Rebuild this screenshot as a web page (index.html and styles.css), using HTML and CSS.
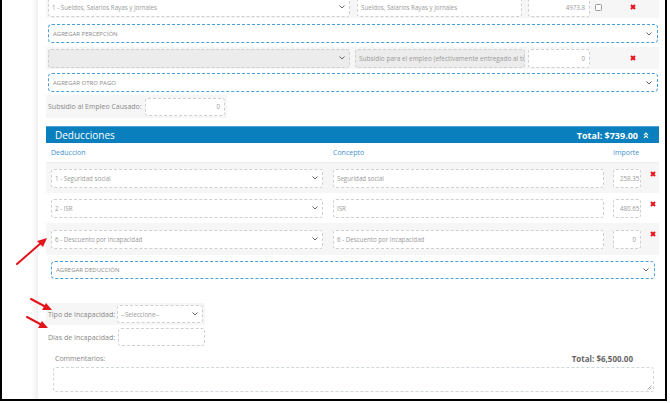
FILE: index.html
```html
<!DOCTYPE html>
<html lang="es">
<head>
<meta charset="utf-8">
<title>Nómina</title>
<link rel="stylesheet" href="styles.css">
</head>
<body>
<div class="frame">
  <div class="panel">
    <div class="prow rowa">
      <div class="field sel w302 mr7"><span>1 - Sueldos, Salarios Rayas y Jornales</span><svg class="chev" width="6" height="4" viewBox="0 0 6 4"><path d="M0.5 0.5L3 3L5.5 0.5" fill="none" stroke="#666" stroke-width="1"/></svg></div>
      <div class="field w165 mr6">Sueldos, Salarios Rayas y Jornales</div>
      <div class="field num w62">4973.8</div>
      <div class="check"></div>
      <svg class="del dela" width="6" height="6" viewBox="0 0 6 6"><path d="M1 1L5 5M5 1L1 5" stroke="#e8121b" stroke-width="2"/></svg>
    </div>
    <div class="add add1"><span>AGREGAR PERCEPCIÓN</span><svg class="chev" width="6" height="4" viewBox="0 0 6 4"><path d="M0.5 0.5L3 3L5.5 0.5" fill="none" stroke="#666" stroke-width="1"/></svg></div>
    <div class="prow rowb">
      <div class="field sel dis w302 mr5"><span></span><svg class="chev" width="6" height="4" viewBox="0 0 6 4"><path d="M0.5 0.5L3 3L5.5 0.5" fill="none" stroke="#666" stroke-width="1"/></svg></div>
      <div class="field dis w170 mr3"><span class="fit">Subsidio para el empleo (efectivamente entregado al tr</span></div>
      <div class="field num w62">0</div>
      <svg class="del delb" width="6" height="6" viewBox="0 0 6 6"><path d="M1 1L5 5M5 1L1 5" stroke="#e8121b" stroke-width="2"/></svg>
    </div>
    <div class="add add2"><span>AGREGAR OTRO PAGO</span><svg class="chev" width="6" height="4" viewBox="0 0 6 4"><path d="M0.5 0.5L3 3L5.5 0.5" fill="none" stroke="#666" stroke-width="1"/></svg></div>
    <div class="inline subs">
      <span class="label">Subsidio al Empleo Causado:</span>
      <div class="field num w80">0</div>
    </div>

    <div class="dhead">
      <span class="dtitle">Deducciones</span>
      <span class="dtotal">Total: $739.00
        <svg width="6" height="7" viewBox="0 0 6 7"><path d="M1 3.2L3 1.2L5 3.2M1 5.8L3 3.8L5 5.8" fill="none" stroke="#fff" stroke-width="1.2"/></svg>
      </span>
    </div>
    <div class="thead">
      <span class="c1">Deduccion</span>
      <span class="c2">Concepto</span>
      <span class="c3">Importe</span>
    </div>
    <div class="trow odd">
      <div class="field sel c1"><span>1 - Seguridad social</span><svg class="chev" width="6" height="4" viewBox="0 0 6 4"><path d="M0.5 0.5L3 3L5.5 0.5" fill="none" stroke="#666" stroke-width="1"/></svg></div>
      <div class="field c2">Seguridad social</div>
      <div class="field num c3 clip">258.35</div>
      <svg class="del tdel" width="6" height="6" viewBox="0 0 6 6"><path d="M1 1L5 5M5 1L1 5" stroke="#e8121b" stroke-width="2"/></svg>
    </div>
    <div class="trow">
      <div class="field sel c1"><span>2 - ISR</span><svg class="chev" width="6" height="4" viewBox="0 0 6 4"><path d="M0.5 0.5L3 3L5.5 0.5" fill="none" stroke="#666" stroke-width="1"/></svg></div>
      <div class="field c2">ISR</div>
      <div class="field num c3 clip">480.65</div>
      <svg class="del tdel" width="6" height="6" viewBox="0 0 6 6"><path d="M1 1L5 5M5 1L1 5" stroke="#e8121b" stroke-width="2"/></svg>
    </div>
    <div class="trow odd last">
      <div class="field sel c1"><span>6 - Descuento por incapacidad</span><svg class="chev" width="6" height="4" viewBox="0 0 6 4"><path d="M0.5 0.5L3 3L5.5 0.5" fill="none" stroke="#666" stroke-width="1"/></svg></div>
      <div class="field c2">6 - Descuento por incapacidad</div>
      <div class="field num c3">0</div>
      <svg class="del tdel" width="6" height="6" viewBox="0 0 6 6"><path d="M1 1L5 5M5 1L1 5" stroke="#e8121b" stroke-width="2"/></svg>
    </div>
    <div class="add add3"><span>AGREGAR DEDUCCIÓN</span><svg class="chev" width="6" height="4" viewBox="0 0 6 4"><path d="M0.5 0.5L3 3L5.5 0.5" fill="none" stroke="#666" stroke-width="1"/></svg></div>

    <div class="inline tipo">
      <span class="label lw">Tipo de Incapacidad:</span>
      <div class="field sel w86"><span>--Seleccione--</span><svg class="chev" width="6" height="4" viewBox="0 0 6 4"><path d="M0.5 0.5L3 3L5.5 0.5" fill="none" stroke="#666" stroke-width="1"/></svg></div>
    </div>
    <div class="inline dias">
      <span class="label lw">Días de Incapacidad:</span>
      <div class="field w87"></div>
    </div>
    <div class="comrow">
      <span class="label">Commentarios:</span>
      <span class="gtotal">Total: $6,500.00</span>
    </div>
    <div class="textarea">
      <svg class="grip" width="5" height="5" viewBox="0 0 5 5"><path d="M0.5 4.5L4.5 0.5M2.5 4.5L4.5 2.5" stroke="#999" stroke-width="0.8"/></svg>
    </div>
  </div>

  <svg class="annot" width="667" height="401" viewBox="0 0 667 401">
    <g stroke="#e3141b" stroke-width="2" stroke-linecap="round">
      <line x1="17" y1="264" x2="41" y2="243"/>
      <line x1="31" y1="299" x2="46" y2="307"/>
      <line x1="27" y1="317" x2="42" y2="325"/>
    </g>
    <g fill="#e3141b">
      <polygon points="47,238 37,241 43,247"/>
      <polygon points="52,310 42,310 46,303"/>
      <polygon points="48,328 38,328 42,321"/>
    </g>
  </svg>
</div>
</body>
</html>
```
FILE: styles.css
```css
* { box-sizing: border-box; margin: 0; padding: 0; }
body { margin: 0; background: #fff; font-family: "Open Sans", "Liberation Sans", sans-serif; color: #888; }

.frame { position: relative; width: 667px; height: 401px; border: 2px solid #000; border-top: none; overflow: hidden; background: #fff; }
.panel { margin-left: 36px; margin-top: -4px; height: 410px; padding: 0 6px 0 8px; background: #fff; box-shadow: -3px 0 5px rgba(0,0,0,0.07); }

.field { height: 19px; border: 1px dashed #cfcfcf; border-radius: 3px; background: #fff; font-size: 6.2px; color: #9a9a9a; display: flex; align-items: center; padding: 0 4px 0 3px; white-space: nowrap; overflow: hidden; flex: none; }
.field.sel { justify-content: space-between; }
.field.num { justify-content: flex-end; }
.field.dis { background: #ececec; }
.field.clip { justify-content: flex-start; padding-left: 6px; }
.fit { font-size: 6.4px; letter-spacing: 0.05px; }
.chev { flex: none; margin-left: 4px; }

.w302 { width: 302px; }
.w165 { width: 165px; }
.w170 { width: 170px; }
.w62 { width: 62px; }
.w80 { width: 80px; }
.w86 { width: 86px; }
.w87 { width: 87px; }
.mr7 { margin-right: 7px; }
.mr6 { margin-right: 6px; }
.mr5 { margin-right: 5px; }
.mr3 { margin-right: 3px; }

.prow { display: flex; align-items: center; background: #f6f6f6; padding: 1px 2px; height: 22px; }
.check { width: 7px; height: 7px; border: 1px solid #999; border-radius: 1.5px; background: #fff; margin-left: 5px; flex: none; }
.del { flex: none; display: block; }
.dela { margin-left: 28px; }
.delb { margin-left: 40px; }

.add { width: 610px; height: 19px; margin-left: 2px; border: 1px dashed #4a9fda; border-radius: 4px; display: flex; align-items: center; justify-content: space-between; padding: 0 5px 0 4px; font-size: 6px; color: #8a8a8a; }
.add1 { margin-top: 6px; margin-bottom: 4px; }
.add2 { margin-top: 4px; margin-bottom: 3px; }
.add3 { width: 604px; margin-left: 5px; margin-top: 6px; height: 18px; }

.inline { display: flex; align-items: center; background: #f6f6f6; padding: 0 2px; }
.label { font-size: 7px; color: #888; white-space: nowrap; }
.subs { width: 181px; height: 23px; }
.subs .label { width: 97px; }
.subs .field { height: 18px; }

.dhead { margin-top: 8px; height: 17px; background: #0a7fbe; border-top: 1px solid #4aa6da; display: flex; align-items: center; justify-content: space-between; padding: 0 10px 0 9px; color: #fff; }
.dtitle { font-size: 10px; }
.dtotal { font-size: 9px; font-weight: bold; display: flex; align-items: center; gap: 5px; }

.thead { height: 20px; display: flex; align-items: center; padding-left: 5px; font-size: 7px; color: #3f91d2; border-bottom: 1px solid #ececec; }
.thead .c1 { width: 282px; }
.thead .c2 { width: 280px; }

.trow { display: flex; align-items: center; height: 30px; padding-left: 5px; }
.trow.odd { background: #f6f6f6; }
.trow.last { height: 32px; }
.trow .c1 { width: 272px; margin-right: 10px; }
.trow .c2 { width: 271px; margin-right: 9px; }
.trow .c3 { width: 28px; }
.tdel { align-self: flex-start; margin-top: 8px; margin-left: 9px; }

.tipo { margin-top: 24px; width: 159px; height: 22px; }
.lw { width: 70px; }
.tipo .field { height: 18px; }
.dias { background: transparent; margin-top: 2px; height: 20px; }
.dias .field { height: 18px; }

.comrow { display: flex; justify-content: space-between; align-items: center; height: 13px; padding: 0 26px 0 9px; margin-top: 5px; }
.gtotal { font-size: 8px; font-weight: bold; color: #666; }
.textarea { position: relative; margin: 2px 0 0 7px; width: 601px; height: 25px; border: 1px dashed #cfd8dd; border-radius: 3px; background: #fff; }
.grip { position: absolute; right: 1px; bottom: 1px; }

.annot { position: absolute; left: -2px; top: 0; pointer-events: none; }
```
